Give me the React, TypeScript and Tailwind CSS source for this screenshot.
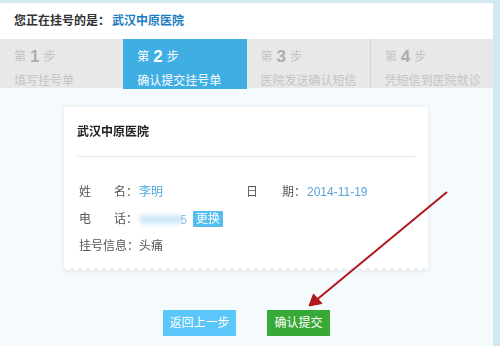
const steps = [
  { n: 1, title: "填写挂号单" },
  { n: 2, title: "确认提交挂号单" },
  { n: 3, title: "医院发送确认短信" },
  { n: 4, title: "凭短信到医院就诊" },
];

const active = 2;

function Zigzag() {
  // teeth along the bottom edge of the receipt card
  const w = 364;
  const tooth = 8;
  let d = `M0 0 L0 2`;
  for (let x = 0; x < w; x += tooth) {
    d += ` L${x + tooth / 2} 6 L${x + tooth} 2`;
  }
  d += ` L${w} 0 Z`;
  let line = `M0 2`;
  for (let x = 0; x < w; x += tooth) {
    line += ` L${x + tooth / 2} 6 L${x + tooth} 2`;
  }
  return (
    <svg width={w} height={8} viewBox={`0 0 ${w} 8`} className="block">
      <path d={d} fill="#ffffff" />
      <path d={line} fill="none" stroke="#e6e9ec" strokeWidth={1} />
    </svg>
  );
}

export default function App() {
  return (
    <div className="relative w-[500px] h-[346px] overflow-hidden bg-[#d3e9f1] font-['Liberation_Sans','Noto_Sans_CJK_SC',sans-serif]">
      <div className="flex h-full pt-[3px]">
        <div className="w-[493px] flex flex-col bg-[#f5fafd]">
          {/* Header */}
          <div className="h-[36px] bg-white flex items-center pl-[14px] text-[12px] font-bold">
            <span className="text-[#333]">您正在挂号的是：</span>
            <span className="text-[#1b7cc0] ml-[2px]">武汉中原医院</span>
          </div>

          {/* Steps */}
          <div className="h-[49px] grid grid-cols-4 bg-[#e8e8e8]">
            {steps.map((s) => {
              const on = s.n === active;
              return (
                <div
                  key={s.n}
                  className={`pl-[14px] flex flex-col ${on ? "bg-[#3eaee3] text-white" : "text-[#c4c4c4]"} ${s.n === 4 ? "border-l border-[#d4d4d4]" : ""}`}
                >
                  <div className="h-[34px] flex items-center text-[12px] pt-[2px]">
                    <span>第</span>
                    <span className={`mx-[4px] text-[17px] font-bold ${on ? "text-white" : "text-[#adadad]"}`}>{s.n}</span>
                    <span>步</span>
                  </div>
                  <div className="text-[12px] leading-[16px] whitespace-nowrap">{s.title}</div>
                </div>
              );
            })}
          </div>

          {/* Content */}
          <div className="flex-1 flex flex-col">
            <div className="ml-[64px] mt-[19px] w-[364px] drop-shadow-[0_0_2px_rgba(150,170,185,0.25)]">
              <div className="bg-white px-[13px] pt-[17px] pb-[12px]">
                <div className="text-[12px] font-bold text-[#222] leading-[16px]">武汉中原医院</div>
                <div className="mt-[16px] h-px bg-[#e3e5e7]" />
                <div className="mt-[26px] text-[12px] text-[#555] flex flex-col gap-[10px] pl-[2px] whitespace-nowrap">
                  <div className="flex items-center h-[17px]">
                    <span className="w-[60px] flex justify-between pr-[1px]">
                      <span>姓</span>
                      <span>名：</span>
                    </span>
                    <span className="text-[#4fa6dc]">李明</span>
                    <span className="ml-[83px] w-[60px] flex justify-between">
                      <span>日</span>
                      <span>期：</span>
                    </span>
                    <span className="text-[#5aa5d8] ml-[1px]">2014-11-19</span>
                  </div>
                  <div className="flex items-center h-[17px]">
                    <span className="w-[60px] flex justify-between pr-[1px]">
                      <span>电</span>
                      <span>话：</span>
                    </span>
                    <span className="relative w-[48px] h-[14px]">
                      <span className="absolute left-[0px] top-[3px] w-[44px] h-[9px] rounded-[4px] bg-[#cfe8f8] blur-[2px]" />
                      <span className="absolute right-[0px] top-[-1px] text-[#8cc3e8]">5</span>
                    </span>
                    <span className="ml-[6px] px-[3px] h-[16px] flex items-center bg-[#55bdf0] text-white">更换</span>
                  </div>
                  <div className="flex items-center h-[17px]">
                    <span className="w-[60px]">挂号信息：</span>
                    <span className="text-[#555]">头痛</span>
                  </div>
                </div>
              </div>
              <Zigzag />
            </div>

            <div className="mt-[36px] flex gap-[31px] ml-[163px]">
              <button className="w-[73px] h-[26px] bg-[#5ac6fa] text-white text-[12px]">返回上一步</button>
              <button className="w-[63px] h-[26px] bg-[#38a936] text-white text-[12px]">确认提交</button>
            </div>
          </div>
        </div>
        <div className="flex-1 bg-[#d3e9f1]" />
      </div>

      {/* annotation arrow */}
      <svg className="absolute left-0 top-0 pointer-events-none" width={500} height={346}>
        <line x1={447} y1={192} x2={314} y2={302} stroke="#b3161c" strokeWidth={2} />
        <path d="M309 306 L313.5 294 L322 303.5 Z" fill="#b3161c" stroke="#b3161c" strokeWidth={1} strokeLinejoin="round" />
      </svg>
    </div>
  );
}
